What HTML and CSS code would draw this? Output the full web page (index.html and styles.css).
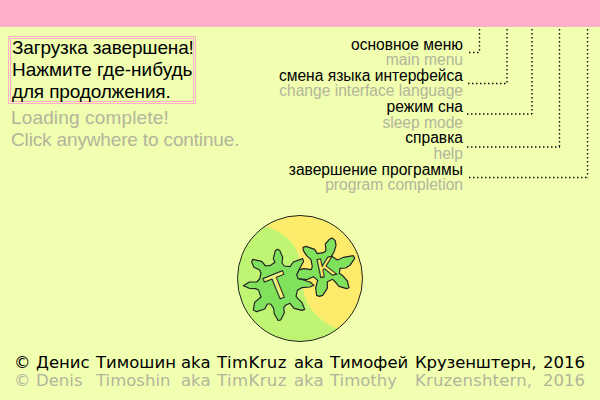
FILE: index.html
```html
<!DOCTYPE html>
<html lang="ru">
<head>
<meta charset="utf-8">
<title>TimKruz</title>
<link rel="stylesheet" href="styles.css">
</head>
<body>
<div class="topbar"></div>
<main class="content">
  <section class="status">
    <div class="notice"><p><span class="tight">Загрузка завершена!</span><br>Нажмите где-нибудь<br><span class="tight">для продолжения.</span></p></div>
    <p class="notice-en"><span class="loose">Loading complete!</span><br><span class="tight">Click anywhere to continue.</span></p>
  </section>
  <ul class="legend">
    <li>основное меню</li><li class="en">main menu</li>
    <li>смена языка интерфейса</li><li class="en">change interface language</li>
    <li>режим сна</li><li class="en">sleep mode</li>
    <li>справка</li><li class="en">help</li>
    <li>завершение программы</li><li class="en">program completion</li>
  </ul>
  <svg class="leaders" width="137" height="160" viewBox="463 27 137 160">
    <path d="M479.500 29V52.500M507 29V83.500M532 29V114M559.500 29V147M587.500 29V177.500M469 52.500H480M468 83.500H507M467 114H532M467 147H560M469 177.500H588"/>
  </svg>
</main>
<svg class="logo" width="128" height="130" viewBox="236 213 128 130">
  <defs><clipPath id="disc"><ellipse cx="300" cy="278.500" rx="62.500" ry="63"/></clipPath></defs>
  <g clip-path="url(#disc)">
    <path fill="#c0f573" d="M236 213H364V343H236z"/>
    <path fill="#fdec6c" d="M260 226H265Q295 236 299 258C302 275 302 290 306 300Q314 318 337 329L370 340V205H260z"/>
  </g>
  <ellipse class="line" cx="300" cy="278.500" rx="62.500" ry="63"/>
  <g transform="translate(230 208) scale(.33333)">
    <path class="gear" d="M135 163L130 152L136 128L142 124L149 127L158 148L156 165L163 174L180 176L190 162L218 152L221 160L208 184L201 200L208 213L220 216L240 222L252 232L240 237L215 239L202 247L198 265L204 272L216 284L224 304L216 307L192 301L180 286L168 291L161 298L163 314L152 336L144 337L133 318L131 301L122 288L112 288L104 303L80 311L70 306L74 283L93 267L86 247L78 242L58 241L40 233L58 222L80 222L89 213L93 195L88 185L72 178L65 162L68 154L95 160L107 174L122 172z"/>
    <path class="gear" d="M200 200L208 185L222 182L244 185L247 176L243 155L230 143L220 128L219 118L228 115L254 124L262 137L280 134L288 128L286 108L298 94L306 90L316 98L318 113L312 132L304 145L310 148L322 156L341 148L370 143L374 151L360 172L347 180L330 181L328 196L340 205L352 219L357 239L350 242L327 235L316 222L308 214L292 221L292 241L278 262L268 265L260 262L257 240L263 217L250 206L230 215L204 212z"/>
  </g>
  <text class="letter pale" transform="translate(281.800 297.500) rotate(-22)" font-size="35">T</text>
  <text class="letter" transform="translate(327.500 275.500) rotate(-12)" font-size="25">K</text>
</svg>
<footer class="credits">
  <span>©</span><span>Денис</span><span>Тимошин</span><span>aka</span><span class="wide">TimKruz</span><span>aka</span><span>Тимофей</span><span class="tight">Крузенштерн,</span><span>2016</span>
  <span class="en">©</span><span class="en">Denis</span><span class="en">Timoshin</span><span class="en">aka</span><span class="en wide">TimKruz</span><span class="en">aka</span><span class="en">Timothy</span><span class="en loose">Kruzenshtern,</span><span class="en">2016</span>
</footer>
</body>
</html>
```
FILE: styles.css
```css
* { box-sizing: border-box; }
body {
  margin: 0;
  width: 600px;
  height: 400px;
  overflow: hidden;
  background: #f0ffb0;
  color: #000;
  font-family: "Liberation Sans", Arial, sans-serif;
  display: flex;
  flex-direction: column;
}
.topbar { height: 27px; background: #ffaec9; flex: none; }
.content { display: flex; height: 186px; flex: none; }
.status { width: 263px; padding: 9px 0 0 8px; font-size: 19px; line-height: 22px; white-space: nowrap; }
.notice {
  width: 188px;
  height: 68px;
  border: 3px double #ffaec9;
  padding: 0 1px;
  display: flex;
  align-items: center;
}
.notice p { margin: 0; }
.notice-en { margin: 3px 0 0; padding-left: 3px; color: #b4b49c; }
.tight { letter-spacing: -0.15px; }
.loose { letter-spacing: 0.15px; }
.wide { letter-spacing: 0.4px; }
.legend {
  list-style: none;
  margin: 0;
  padding: 9.500px 0 0;
  width: 200px;
  font-size: 15.600px;
  line-height: 15.650px;
  text-align: right;
  white-space: nowrap;
}
.en { color: #b4b49c; }
.leaders { display: block; flex: none; }
.leaders path { fill: none; stroke: #111; stroke-width: 1.400; stroke-dasharray: 1.500 2.500; }
.logo { display: block; margin-left: 236px; flex: none; }
.line { fill: none; stroke: #222; stroke-width: 1; }
.gear { fill: #80e15c; stroke: #222; stroke-width: 3.500; stroke-linejoin: round; }
.letter {
  font-family: "Liberation Sans", Arial, sans-serif;
  fill: #fdec6c;
  stroke: #222;
  stroke-width: 2.200;
  paint-order: stroke;
  text-anchor: middle;
}
.pale { fill: #ecf580; }
.credits {
  display: grid;
  grid-template-columns: 22px 60px 85px 36px 77px 36px 85px 128px 60px;
  grid-auto-rows: 18px;
  padding: 11px 0 0 14px;
  font-family: "DejaVu Sans", Verdana, sans-serif;
  font-size: 16.500px;
  line-height: 18px;
  white-space: nowrap;
}
```
